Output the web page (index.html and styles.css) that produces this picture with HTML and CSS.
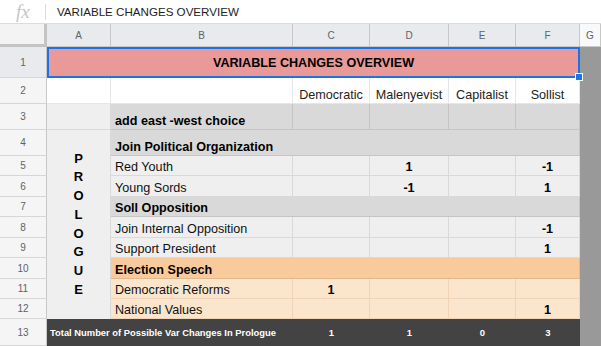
FILE: index.html
```html
<!DOCTYPE html>
<html>
<head>
<meta charset="utf-8">
<link rel="stylesheet" href="styles.css">
</head>
<body>
<div class="fbar"><span class="fx">fx</span><span class="sep"></span><span class="ftext">VARIABLE CHANGES OVERVIEW</span></div>
<div class="sheet">
  <div class="corner"></div>
  <div class="ch sel">A</div>
  <div class="ch sel">B</div>
  <div class="ch sel">C</div>
  <div class="ch sel">D</div>
  <div class="ch sel">E</div>
  <div class="ch sel">F</div>
  <div class="ch">G</div>
  <div class="gcol"></div>

  <div class="rh sel">1</div>
  <div class="title s6">VARIABLE CHANGES OVERVIEW<span class="selbox"><span class="handle"></span></span></div>

  <div class="rh">2</div>
  <div class="c w"></div>
  <div class="c w"></div>
  <div class="c w ctr">Democratic</div>
  <div class="c w ctr">Malenyevist</div>
  <div class="c w ctr">Capitalist</div>
  <div class="c w ctr">Sollist</div>

  <div class="rh">3</div>
  <div class="c g1"></div>
  <div class="c g2 b">add east -west choice</div>
  <div class="c g2"></div>
  <div class="c g2"></div>
  <div class="c g2"></div>
  <div class="c g2"></div>

  <div class="rh">4</div>
  <div class="prologue"><span>P</span><span>R</span><span>O</span><span>L</span><span>O</span><span>G</span><span>U</span><span>E</span></div>
  <div class="c g2 b s5">Join Political Organization</div>

  <div class="rh">5</div>
  <div class="c g1">Red Youth</div>
  <div class="c g1"></div>
  <div class="c g1 n">1</div>
  <div class="c g1"></div>
  <div class="c g1 n">-1</div>

  <div class="rh">6</div>
  <div class="c g1">Young Sords</div>
  <div class="c g1"></div>
  <div class="c g1 n">-1</div>
  <div class="c g1"></div>
  <div class="c g1 n">1</div>

  <div class="rh">7</div>
  <div class="c g2 b s5">Soll Opposition</div>

  <div class="rh">8</div>
  <div class="c g1">Join Internal Opposition</div>
  <div class="c g1"></div>
  <div class="c g1"></div>
  <div class="c g1"></div>
  <div class="c g1 n">-1</div>

  <div class="rh">9</div>
  <div class="c g1">Support President</div>
  <div class="c g1"></div>
  <div class="c g1"></div>
  <div class="c g1"></div>
  <div class="c g1 n">1</div>

  <div class="rh">10</div>
  <div class="c o2 b s5">Election Speech</div>

  <div class="rh">11</div>
  <div class="c o1">Democratic Reforms</div>
  <div class="c o1 n">1</div>
  <div class="c o1"></div>
  <div class="c o1"></div>
  <div class="c o1"></div>

  <div class="rh">12</div>
  <div class="c o1">National Values</div>
  <div class="c o1"></div>
  <div class="c o1"></div>
  <div class="c o1"></div>
  <div class="c o1 n">1</div>

  <div class="rh">13</div>
  <div class="total s2">Total Number of Possible Var Changes In Prologue</div>
  <div class="tnum">1</div>
  <div class="tnum">1</div>
  <div class="tnum">0</div>
  <div class="tnum">3</div>
</div>
</body>
</html>
```
FILE: styles.css
```css
* { box-sizing: border-box; }
body {
  margin: 0;
  width: 601px;
  height: 346px;
  overflow: hidden;
  background: #fff;
  font-family: "Liberation Sans", Arial, sans-serif;
  color: #000;
}
.fbar {
  height: 24px;
  display: flex;
  align-items: center;
  border-bottom: 1px solid #dadce0;
  background: #fff;
}
.fx {
  width: 45px;
  padding-left: 16px;
  font-family: "Liberation Serif", serif;
  font-style: italic;
  font-size: 19px;
  line-height: 1;
  color: #c6c6c6;
}
.sep { width: 1px; height: 16px; background: #dadce0; }
.ftext { margin-left: 11px; font-size: 11.6px; color: #222; }

.sheet {
  display: grid;
  grid-template-columns: 47px 64px 182px 77px 79px 67px 64px 1fr;
  grid-template-rows: 23px 31px 26px 26px 26px 20px 21px 20px 21px 20px 21px 20px 20px 27px;
  font-size: 12.6px;
}
.s2 { grid-column: span 2; }
.s5 { grid-column: span 5; }
.s6 { grid-column: span 6; }

.corner {
  background: #f3f3f3;
  border-right: 3px solid #c4c4c4;
  border-bottom: 3px solid #c4c4c4;
}
.ch {
  display: flex;
  align-items: center;
  justify-content: center;
  background: #f8f9fa;
  border-right: 1px solid #c7c7c7;
  border-bottom: 1px solid #c7c7c7;
  font-size: 10px;
  color: #5f6368;
}
.ch.sel { background: #e8eaed; }
.gcol { grid-column: 8; grid-row: 2 / 15; background: #999; }

.rh {
  display: flex;
  align-items: center;
  justify-content: center;
  background: #f5f5f5;
  border-right: 1px solid #c7c7c7;
  border-bottom: 1px solid #d6d6d6;
  font-size: 10px;
  color: #5f6368;
}
.rh.sel { background: #e8eaed; }

.title {
  position: relative;
  display: flex;
  align-items: center;
  justify-content: center;
  background: #ea9999;
  font-weight: bold;
}
.selbox {
  position: absolute;
  inset: 0;
  border: 2px solid #1a73e8;
}
.handle {
  position: absolute;
  right: -5px;
  bottom: -5px;
  width: 8px;
  height: 8px;
  background: #1a73e8;
  border: 1px solid #fff;
}

.c {
  display: flex;
  align-items: flex-end;
  padding: 0 4px 1px;
  line-height: 14px;
  white-space: nowrap;
  border-right: 1px solid rgba(0, 0, 0, 0.09);
  border-bottom: 1px solid rgba(0, 0, 0, 0.09);
  color: #111;
}
.ctr { justify-content: center; color: #222; }
.b { font-weight: bold; color: #000; }
.n { justify-content: center; font-weight: bold; color: #000; }
.w { background: #fff; border-color: #e6e6e6; }
.g1 { background: #efefef; }
.g2 { background: #d9d9d9; }
.o1 { background: #fce5cd; border-color: rgba(150, 90, 30, 0.12); }
.o2 { background: #f9cb9c; }

.prologue {
  grid-row: span 9;
  display: flex;
  flex-direction: column;
  align-items: center;
  justify-content: center;
  background: #efefef;
  border-right: 1px solid rgba(0, 0, 0, 0.09);
  font-weight: bold;
  font-size: 13px;
  line-height: 18.75px;
}

.total {
  display: flex;
  align-items: center;
  padding-left: 3px;
  background: #434343;
  color: #fff;
  font-weight: bold;
  font-size: 9.4px;
  white-space: nowrap;
}
.tnum {
  display: flex;
  align-items: center;
  justify-content: center;
  background: #434343;
  color: #fff;
  font-weight: bold;
  font-size: 9.5px;
}
```
